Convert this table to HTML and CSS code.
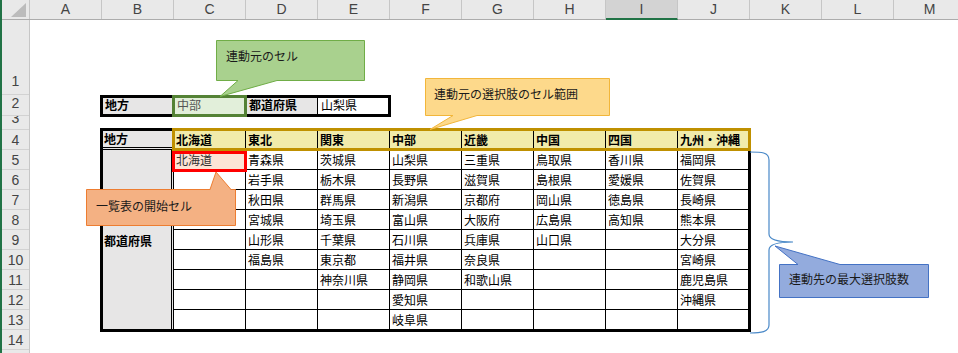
FILE: index.html
```html
<!DOCTYPE html>
<html lang="ja">
<head>
<meta charset="utf-8">
<title>連動プルダウン</title>
<link rel="stylesheet" href="styles.css">
</head>
<body>
<div class="app">
  <div class="colhead">
    <div class="corner"><svg width="27" height="19" viewBox="0 0 27 19"><polygon points="24,3 24,17 9,17" fill="#bcbcbc"/></svg></div>
    <div class="ch">A</div><div class="ch">B</div><div class="ch">C</div><div class="ch">D</div><div class="ch">E</div><div class="ch">F</div><div class="ch">G</div><div class="ch">H</div><div class="ch sel">I</div><div class="ch">J</div><div class="ch">K</div><div class="ch">L</div><div class="ch">M</div>
  </div>
  <div class="main">
    <div class="rowhead">
      <div class="rh rh1">1</div>
      <div class="rh rh2">2</div>
      <div class="rh rh3"><span>3</span></div>
      <div class="rh">4</div>
      <div class="rh">5</div>
      <div class="rh">6</div>
      <div class="rh">7</div>
      <div class="rh">8</div>
      <div class="rh">9</div>
      <div class="rh">10</div>
      <div class="rh">11</div>
      <div class="rh">12</div>
      <div class="rh">13</div>
      <div class="rh">14</div>
      <div class="rh"></div>
    </div>
    <div class="sheet">
      <div class="t1">
        <div class="c gray">地方</div>
        <div class="c green">中部</div>
        <div class="c gray">都道府県</div>
        <div class="c">山梨県</div>
        <div class="hl-green"></div>
      </div>
      <div class="t2">
        <div class="g gray hd">地方</div>
        <div class="g yel">北海道</div><div class="g yel">東北</div><div class="g yel">関東</div><div class="g yel">中部</div><div class="g yel">近畿</div><div class="g yel">中国</div><div class="g yel">四国</div><div class="g yel">九州・沖縄</div>
        <div class="g gray merged">都道府県</div>
        <div class="g pink">北海道</div><div class="g">青森県</div><div class="g">茨城県</div><div class="g">山梨県</div><div class="g">三重県</div><div class="g">鳥取県</div><div class="g">香川県</div><div class="g">福岡県</div>
        <div class="g"></div><div class="g">岩手県</div><div class="g">栃木県</div><div class="g">長野県</div><div class="g">滋賀県</div><div class="g">島根県</div><div class="g">愛媛県</div><div class="g">佐賀県</div>
        <div class="g"></div><div class="g">秋田県</div><div class="g">群馬県</div><div class="g">新潟県</div><div class="g">京都府</div><div class="g">岡山県</div><div class="g">徳島県</div><div class="g">長崎県</div>
        <div class="g"></div><div class="g">宮城県</div><div class="g">埼玉県</div><div class="g">富山県</div><div class="g">大阪府</div><div class="g">広島県</div><div class="g">高知県</div><div class="g">熊本県</div>
        <div class="g"></div><div class="g">山形県</div><div class="g">千葉県</div><div class="g">石川県</div><div class="g">兵庫県</div><div class="g">山口県</div><div class="g"></div><div class="g">大分県</div>
        <div class="g"></div><div class="g">福島県</div><div class="g">東京都</div><div class="g">福井県</div><div class="g">奈良県</div><div class="g"></div><div class="g"></div><div class="g">宮崎県</div>
        <div class="g"></div><div class="g"></div><div class="g">神奈川県</div><div class="g">静岡県</div><div class="g">和歌山県</div><div class="g"></div><div class="g"></div><div class="g">鹿児島県</div>
        <div class="g"></div><div class="g"></div><div class="g"></div><div class="g">愛知県</div><div class="g"></div><div class="g"></div><div class="g"></div><div class="g">沖縄県</div>
        <div class="g"></div><div class="g"></div><div class="g"></div><div class="g">岐阜県</div><div class="g"></div><div class="g"></div><div class="g"></div><div class="g"></div>
        <div class="hl-gold"></div>
        <div class="hl-red"></div>
      </div>
    </div>
  </div>
  <svg class="shapes" width="958" height="353" viewBox="0 0 958 353">
    <path d="M216.5,40.5 H364.5 V80.5 H277 L220,96.5 L238,80.5 H216.5 Z" fill="#a9d18e" stroke="#70ad47"/>
    <text class="lbl" x="226" y="61">連動元のセル</text>
    <path d="M425.5,78.5 H609.5 V115.5 H477 L430,129.5 L453,115.5 H425.5 Z" fill="#fdd98b" stroke="#f2b63a"/>
    <text class="lbl" x="434" y="99">連動元の選択肢のセル範囲</text>
    <path d="M86.5,189.5 H210 L216,172 L231,189.5 H235.5 V225.5 H86.5 Z" fill="#f4b183" stroke="#ed7d31"/>
    <text class="lbl" x="96" y="211">一覧表の開始セル</text>
    <path d="M779.5,264.5 H798 L775,246 L840,264.5 H928.5 V297.5 H779.5 Z" fill="#93abdd" stroke="#4472c4"/>
    <text class="lbl" x="789" y="284">連動先の最大選択肢数</text>
    <path d="M750,152 C761,152 769,152 769,160 L769,234 C769,240 781,242 793,242 C781,242 769,244 769,250 L769,325 C769,332 761,333 750,333" fill="none" stroke="#4a89c8" stroke-width="1.2"/>
  </svg>
</div>
</body>
</html>
```

FILE: styles.css
```css
* {
  box-sizing: border-box;
  margin: 0;
  padding: 0;
}

html, body {
  width: 958px;
  height: 353px;
  overflow: hidden;
  background: #fff;
}

body {
  font-family: "Noto Sans CJK JP", sans-serif;
  color: #000;
}

.app {
  position: relative;
  width: 958px;
  height: 353px;
  border-left: 2px solid #217346;
  overflow: hidden;
}

/* column header */
.colhead {
  display: flex;
  height: 20px;
  background: #e9e9e9;
  border-bottom: 1px solid #acacac;
}

.corner {
  flex: none;
  width: 28px;
  border-right: 1px solid #c6c6c6;
}

.corner svg {
  display: block;
}

.ch {
  flex: none;
  width: 72px;
  border-right: 1px solid #c6c6c6;
  text-align: center;
  font: 14px/19px "Liberation Sans", Arial, sans-serif;
  color: #444;
}

.ch.sel {
  background: #d3d3d3;
  border-bottom: 2px solid #217346;
  margin-bottom: -1px;
}

/* body */
.main {
  display: flex;
}

.rowhead {
  flex: none;
  width: 28px;
  height: 333px;
  background: #e9e9e9;
  border-right: 1px solid #c6c6c6;
  display: flex;
  flex-direction: column;
}

.rh {
  flex: none;
  height: 20px;
  border-bottom: 1px solid #d2d2d2;
  display: flex;
  justify-content: center;
  align-items: center;
  font: 14px/16px "Liberation Sans", Arial, sans-serif;
  color: #444;
  overflow: hidden;
}

.rh1 {
  height: 75px;
  align-items: flex-end;
  padding-bottom: 5px;
}

.rh2 {
  height: 21px;
  padding-bottom: 4px;
}

.rh3 {
  height: 14px;
  align-items: flex-start;
}

.rh3 span {
  margin-top: -6px;
}

.sheet {
  display: grid;
  grid-template-columns: repeat(13, 72px);
  grid-template-rows: 75px 21px 14px repeat(11, 20px);
}

/* table 1 */
.t1 {
  grid-column: 2 / 6;
  grid-row: 2;
  position: relative;
  display: grid;
  grid-template-columns: repeat(4, 72px);
  grid-template-rows: 21px;
}

.t1::after {
  content: "";
  position: absolute;
  top: 0;
  left: -2px;
  right: -1px;
  bottom: -1px;
  border: 3px solid #000;
  z-index: 1;
}

.c {
  border-right: 1px solid #000;
  padding-left: 3px;
  font-size: 12px;
  line-height: 20px;
  white-space: nowrap;
}

.green {
  background: #e2efda;
  color: #555;
}

.hl-green {
  position: absolute;
  grid-column: 2 / 3;
  grid-row: 1 / 2;
  top: 0;
  left: -2px;
  right: -1px;
  bottom: -1px;
  border: 3px solid #548235;
  z-index: 2;
}

/* table 2 */
.t2 {
  grid-column: 2 / 11;
  grid-row: 4 / 14;
  position: relative;
  display: grid;
  grid-template-columns: repeat(9, 72px);
  grid-template-rows: repeat(10, 20px);
}

.t2::after {
  content: "";
  position: absolute;
  top: -2px;
  left: -2px;
  right: -1px;
  bottom: -2px;
  border: 3px solid #000;
  z-index: 1;
}

.g {
  border-right: 1px solid #000;
  border-bottom: 1px solid #000;
  padding-left: 2px;
  font-size: 12px;
  line-height: 19px;
  white-space: nowrap;
  overflow: hidden;
}

.gray {
  background: #e7e6e6;
  font-weight: 700;
}

.yel {
  background: #f1ebab;
  font-weight: 700;
}

.pink {
  background: #fce4d6;
  color: #333;
}

.hd {
  border-bottom: 3px double #000;
  line-height: 17px;
}

.merged {
  grid-column: 1;
  grid-row: 2 / 11;
  border-right: 3px double #000;
  border-bottom: none;
  display: flex;
  align-items: center;
}

.hl-gold {
  position: absolute;
  grid-column: 2 / 10;
  grid-row: 1 / 2;
  top: -2px;
  left: -2px;
  right: -1px;
  bottom: -1px;
  border: 3px solid #bf9000;
  z-index: 2;
}

.hl-red {
  position: absolute;
  grid-column: 2 / 3;
  grid-row: 2 / 3;
  top: 1px;
  left: -2px;
  right: -1px;
  bottom: -2px;
  border: 3px solid #ff0000;
  z-index: 3;
}

/* callouts */
.shapes {
  position: absolute;
  top: 0;
  left: -2px;
  z-index: 10;
  pointer-events: none;
}

.lbl {
  font-family: "Noto Sans CJK JP", sans-serif;
  font-size: 12px;
  fill: #1a1a1a;
}
```
